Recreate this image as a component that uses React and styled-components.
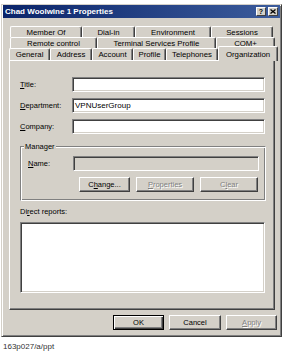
import React from "react";
import styled, { createGlobalStyle } from "styled-components";

const GlobalStyle = createGlobalStyle`
  html, body { margin: 0; padding: 0; background: #fff; }
  body {
    font-family: "Liberation Sans", Arial, sans-serif;
    font-size: 7.5px;
    color: #000;
  }
  * { box-sizing: border-box; }
`;

const Page = styled.div`
  width: 286px;
  height: 355px;
  padding: 4px 0 0 1px;
`;

const Dialog = styled.div`
  width: 281px;
  height: 333px;
  background: #d4d0c8;
  border: 1px solid;
  border-color: #d4d0c8 #404040 #404040 #d4d0c8;
  box-shadow: inset 1px 1px 0 #fff, inset -1px -1px 0 #808080;
  padding: 0 1px;
  display: flex;
  flex-direction: column;
`;

const TitleBar = styled.div`
  height: 13px;
  background: linear-gradient(to right, #0a246a, #3c5c9c);
  display: flex;
  align-items: center;
  padding: 0 2px 0 2px;
  color: #fff;
  font-weight: bold;
  font-size: 8px;
`;

const TitleText = styled.span`
  flex: 1;
`;

const CaptionButton = styled.div`
  width: 10px;
  height: 9px;
  margin-left: ${(p) => p.gap || 0}px;
  background: #d4d0c8;
  border: 1px solid;
  border-color: #fff #404040 #404040 #fff;
  display: flex;
  align-items: center;
  justify-content: center;
  color: #000;
  font-size: 7px;
  font-weight: bold;
  line-height: 1;
`;

const TabArea = styled.div`
  margin-top: 8px;
  display: flex;
  flex-direction: column;
`;

const TabRow = styled.div`
  display: flex;
  height: ${(p) => p.h}px;
  margin-left: ${(p) => p.left}px;
  position: relative;
  z-index: ${(p) => p.z || 0};
`;

const Tab = styled.div`
  height: ${(p) => (p.selected ? "15px" : "100%")};
  margin-top: ${(p) => (p.selected ? "-2px" : "0")};
  background: #d4d0c8;
  border-top: 1px solid #fff;
  border-left: 1px solid #fff;
  border-right: 1px solid #404040;
  box-shadow: inset -1px 0 0 #808080;
  border-radius: 2px 2px 0 0;
  display: flex;
  align-items: center;
  justify-content: center;
  white-space: nowrap;
  font-size: 7.8px;
  position: relative;
  z-index: ${(p) => (p.selected ? 2 : 0)};
`;

const Panel = styled.div`
  margin-left: 6px;
  width: 266px;
  height: 250px;
  background: #d4d0c8;
  border: 1px solid;
  border-color: #fff #404040 #404040 #fff;
  box-shadow: inset -1px -1px 0 #808080;
  padding: 16px 0 0 10px;
  display: flex;
  flex-direction: column;
`;

const Field = styled.div`
  display: flex;
  align-items: center;
  height: 15px;
  margin-bottom: 6px;
`;

const Label = styled.span`
  width: ${(p) => p.w || 52}px;
  white-space: nowrap;
`;

const Key = styled.span`
  text-decoration: underline;
`;

const Input = styled.div`
  width: ${(p) => p.w}px;
  height: 15px;
  background: ${(p) => (p.disabled ? "#d4d0c8" : "#fff")};
  border: 1px solid;
  border-color: #808080 #fff #fff #808080;
  box-shadow: inset 1px 1px 0 #404040, inset -1px -1px 0 #d4d0c8;
  padding: 0 2px;
  display: flex;
  align-items: center;
  font-size: 8px;
`;

const Group = styled.div`
  position: relative;
  margin-top: 6px;
  width: 246px;
  height: 55px;
  border: 1px solid;
  border-color: #808080 #fff #fff #808080;
  box-shadow: inset 1px 1px 0 #fff, inset -1px -1px 0 #808080;
  padding: 9px 0 0 7px;
`;

const Legend = styled.span`
  position: absolute;
  top: -5px;
  left: 3px;
  padding: 0 1px;
  background: #d4d0c8;
  line-height: 9px;
`;

const ButtonRow = styled.div`
  display: flex;
  gap: ${(p) => p.gap || 6}px;
  margin-left: ${(p) => p.left || 0}px;
  justify-content: ${(p) => p.justify || "flex-start"};
`;

const Button = styled.div`
  width: ${(p) => p.w}px;
  height: 15px;
  background: #d4d0c8;
  border: 1px solid;
  border-color: ${(p) => (p.primary ? "#000" : "#fff #404040 #404040 #fff")};
  box-shadow: ${(p) =>
    p.primary
      ? "inset 1px 1px 0 #fff, inset -1px -1px 0 #404040, inset -2px -2px 0 #808080"
      : "inset -1px -1px 0 #808080"};
  display: flex;
  align-items: center;
  justify-content: center;
  color: ${(p) => (p.disabled ? "#808080" : "#000")};
  text-shadow: ${(p) => (p.disabled ? "1px 1px 0 #fff" : "none")};
`;

const SectionLabel = styled.div`
  margin-top: 6px;
  line-height: 10px;
  height: 10px;
`;

const ListBox = styled.div`
  margin-top: 5px;
  width: 245px;
  height: 71px;
  background: #fff;
  border: 1px solid;
  border-color: #808080 #fff #fff #808080;
  box-shadow: inset 1px 1px 0 #404040, inset -1px -1px 0 #d4d0c8;
`;

const Footer = styled.div`
  margin-top: 5px;
  padding-right: 3px;
`;

const Caption = styled.div`
  margin: 5px 0 0 2px;
  font-size: 8px;
  color: #333;
  line-height: 10px;
`;

const tabRows = [
  { h: 11, left: 7, tabs: [["Member Of", 72], ["Dial-in", 53], ["Environment", 76], ["Sessions", 62]] },
  { h: 11, left: 7, tabs: [["Remote control", 87], ["Terminal Services Profile", 119], ["COM+", 59]] },
  {
    h: 12,
    left: 6,
    z: 1,
    tabs: [["General", 41], ["Address", 42], ["Account", 41], ["Profile", 33], ["Telephones", 52], ["Organization", 60]],
  },
];

function App() {
  return (
    <Page>
      <GlobalStyle />
      <Dialog>
        <TitleBar>
          <TitleText>Chad Woolwine 1 Properties</TitleText>
          <CaptionButton>?</CaptionButton>
          <CaptionButton gap={2}>
            <svg width="6" height="5" viewBox="0 0 6 5">
              <path d="M0.5 0.5 L5.5 4.5 M5.5 0.5 L0.5 4.5" stroke="#000" strokeWidth="1.3" />
            </svg>
          </CaptionButton>
        </TitleBar>

        <TabArea>
          {tabRows.map((row, i) => (
            <TabRow key={i} h={row.h} left={row.left} z={row.z}>
              {row.tabs.map(([name, w]) => (
                <Tab key={name} style={{ width: w }} selected={name === "Organization"}>
                  {name}
                </Tab>
              ))}
            </TabRow>
          ))}
        </TabArea>

        <Panel>
          <Field>
            <Label><Key>T</Key>itle:</Label>
            <Input w={193} />
          </Field>
          <Field>
            <Label><Key>D</Key>epartment:</Label>
            <Input w={193}>VPNUserGroup</Input>
          </Field>
          <Field>
            <Label><Key>C</Key>ompany:</Label>
            <Input w={193} />
          </Field>

          <Group>
            <Legend>Manager</Legend>
            <Field>
              <Label w={45}><Key>N</Key>ame:</Label>
              <Input w={186} disabled />
            </Field>
            <ButtonRow left={51} gap={6}>
              <Button w={51}>C<Key>h</Key>ange...</Button>
              <Button w={58} disabled><Key>P</Key>roperties</Button>
              <Button w={58} disabled>C<Key>l</Key>ear</Button>
            </ButtonRow>
          </Group>

          <SectionLabel>Di<Key>r</Key>ect reports:</SectionLabel>
          <ListBox />
        </Panel>

        <Footer>
          <ButtonRow justify="flex-end" gap={5}>
            <Button w={51} primary>OK</Button>
            <Button w={52}>Cancel</Button>
            <Button w={51} disabled><Key>A</Key>pply</Button>
          </ButtonRow>
        </Footer>
      </Dialog>
      <Caption>163p027/a/ppt</Caption>
    </Page>
  );
}

export default App;
